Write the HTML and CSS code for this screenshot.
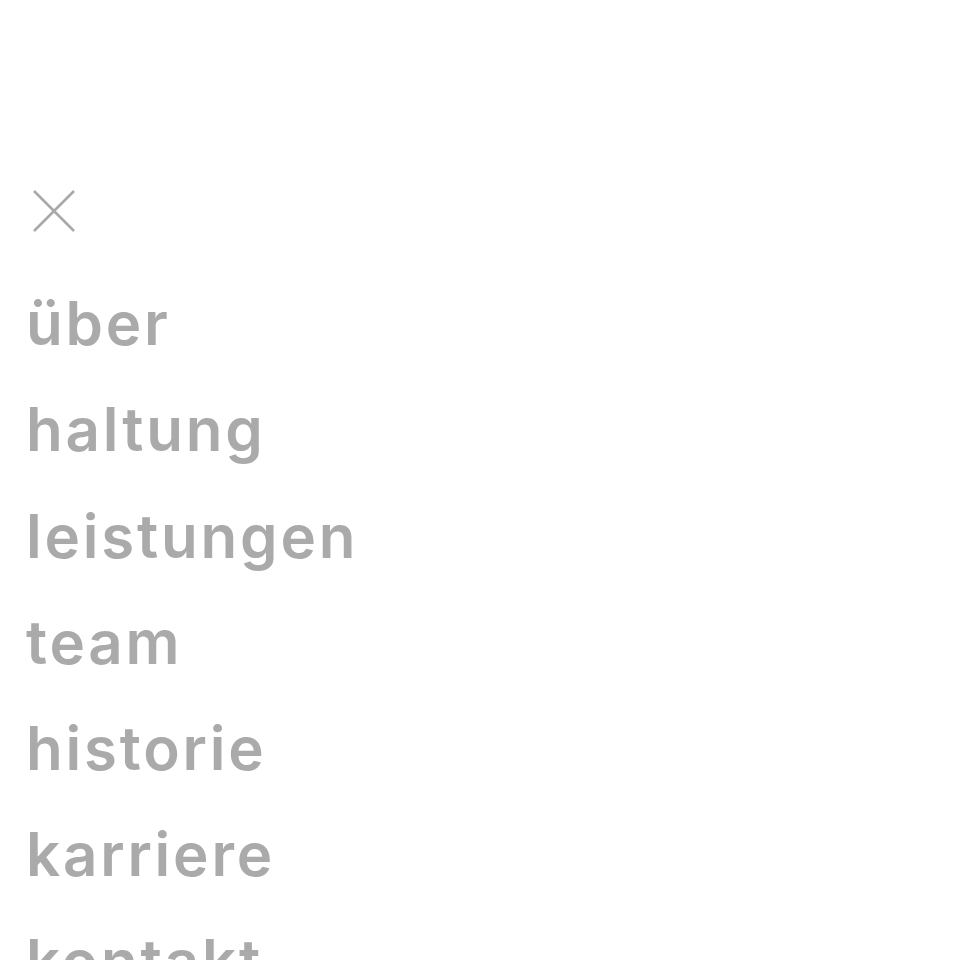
FILE: index.html
```html
<!DOCTYPE html>
<html lang="de">
<head>
<meta charset="utf-8">
<title>Menü</title>
<link rel="stylesheet" href="styles.css">
</head>
<body>
<nav class="menu">
  <button class="close" aria-label="Menü schließen">
    <svg width="44" height="44" viewBox="0 0 44 44" fill="none" stroke="#a9a9a9" stroke-width="2.6">
      <path d="M2 2 L42 42 M42 2 L2 42"/>
    </svg>
  </button>
  <ul class="items">
    <li><a href="#">über</a></li>
    <li><a href="#">haltung</a></li>
    <li><a href="#">leistungen</a></li>
    <li><a href="#">team</a></li>
    <li><a href="#">historie</a></li>
    <li><a href="#">karriere</a></li>
    <li><a href="#">kontakt</a></li>
  </ul>
</nav>
</body>
</html>
```
FILE: styles.css
```css
html, body {
  margin: 0;
  padding: 0;
  background: #ffffff;
}
.menu {
  padding: 189px 26px 0 26px;
  font-family: "Inter", "Liberation Sans", Arial, sans-serif;
}
.close {
  display: block;
  margin: 0 0 0 6px;
  padding: 0;
  border: 0;
  background: none;
  width: 44px;
  height: 44px;
  cursor: pointer;
}
.close svg {
  display: block;
}
.items {
  list-style: none;
  margin: 37px 0 0 0;
  padding: 0;
}
.items li {
  font-size: 60px;
  line-height: 106.3px;
  font-weight: 600;
  letter-spacing: 2.8px;
}
.items a {
  color: #aaaaaa;
  text-decoration: none;
}
```
